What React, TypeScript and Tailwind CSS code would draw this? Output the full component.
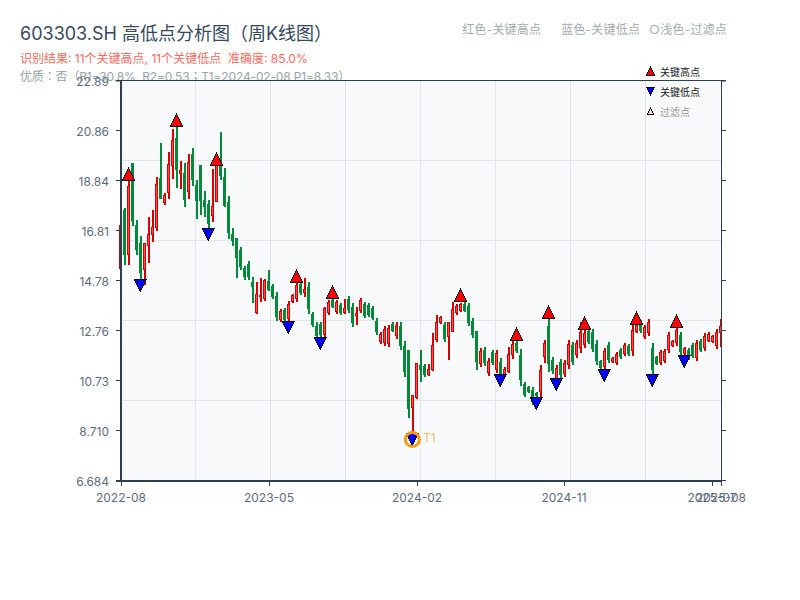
type Candle = [string, number, number, number?, number?];

// one row per week: colour, high y, low y, body top y, body bottom y (in page pixels)
const candles: Candle[] = [
  ['r', 216, 278], ['g', 208, 265, 210, 255], ['r', 180, 265, 186, 255], ['g', 163, 226, 163, 221],
  ['g', 220, 255], ['g', 236, 280], ['r', 243, 285, 243, 270], ['r', 217, 263, 234, 246],
  ['r', 210, 242, 227, 235], ['r', 177, 231, 184, 228], ['g', 143, 199, 178, 199], ['r', 193, 205],
  ['r', 152, 199, 164, 193], ['r', 129, 179, 140, 166], ['g', 127, 188, 138, 170], ['r', 161, 189, 170, 174],
  ['g', 163, 207, 173, 200], ['r', 154, 199, 162, 192], ['g', 148, 186], ['g', 180, 219, 185, 201],
  ['g', 165, 215, 165, 201], ['g', 191, 217, 200, 207], ['g', 200, 228], ['r', 169, 222, 206, 216],
  ['r', 163, 202, 163, 202], ['g', 132, 180, 166, 176], ['g', 168, 207, 177, 206], ['g', 196, 239, 202, 233],
  ['g', 228, 246, 234, 241], ['g', 238, 278, 238, 258], ['g', 247, 270], ['g', 266, 280, 268, 277],
  ['g', 261, 280], ['g', 277, 303, 282, 287], ['r', 282, 314, 294, 313], ['r', 278, 302, 295, 297],
  ['r', 279, 301, 280, 299], ['g', 270, 291, 281, 290], ['g', 284, 299], ['g', 292, 321],
  ['r', 309, 322], ['g', 308, 322], ['r', 301, 322], ['r', 294, 303],
  ['r', 282, 302], ['g', 282, 295], ['r', 278, 297, 289, 293], ['g', 282, 314],
  ['g', 312, 327], ['g', 322, 337, 326, 336], ['g', 322, 337], ['r', 307, 337, 308, 335],
  ['r', 300, 315], ['g', 299, 308], ['r', 300, 314], ['g', 303, 315],
  ['r', 299, 314, 308, 313], ['g', 296, 313], ['g', 303, 327], ['r', 307, 325, 313, 316],
  ['r', 298, 313], ['g', 302, 318], ['g', 303, 317], ['g', 306, 320],
  ['g', 318, 335], ['r', 332, 344], ['r', 326, 346], ['r', 325, 347],
  ['g', 322, 332], ['r', 322, 339], ['g', 322, 350], ['g', 341, 377],
  ['g', 350, 418, 350, 409], ['r', 395, 433, 395, 408], ['r', 363, 399, 363, 398], ['g', 350, 382, 365, 370],
  ['g', 364, 377], ['r', 364, 376, 369, 375], ['r', 333, 371, 345, 370], ['r', 315, 342, 322, 340],
  ['r', 316, 324], ['g', 322, 342], ['r', 322, 360, 322, 337], ['r', 302, 332, 309, 332],
  ['r', 304, 315], ['r', 303, 312], ['g', 302, 312], ['g', 303, 326],
  ['g', 318, 338], ['g', 331, 370, 331, 362], ['r', 348, 367], ['g', 347, 366],
  ['r', 358, 376], ['g', 350, 365], ['r', 350, 373], ['g', 358, 383],
  ['r', 367, 377], ['r', 347, 373, 354, 372], ['r', 340, 359, 344, 355], ['g', 341, 353],
  ['g', 349, 386], ['g', 382, 397], ['g', 386, 393], ['g', 387, 405],
  ['g', 392, 397], ['r', 365, 397], ['r', 340, 363, 343, 357], ['g', 318, 372],
  ['g', 357, 374], ['r', 365, 387], ['g', 359, 378], ['r', 360, 377],
  ['r', 340, 369], ['g', 342, 365], ['r', 340, 358], ['r', 322, 353, 332, 348],
  ['r', 330, 348], ['g', 329, 344], ['g', 329, 352], ['g', 340, 365],
  ['g', 360, 369], ['r', 348, 370], ['g', 342, 363], ['r', 357, 363],
  ['r', 352, 365], ['g', 348, 359], ['r', 343, 356], ['g', 344, 356],
  ['r', 325, 356], ['r', 324, 333], ['g', 320, 333], ['r', 325, 339],
  ['r', 319, 336], ['g', 343, 375], ['g', 356, 365], ['r', 350, 365],
  ['r', 349, 363], ['r', 332, 353], ['r', 340, 347], ['r', 327, 346],
  ['g', 332, 355], ['r', 347, 355], ['g', 348, 360], ['g', 343, 358],
  ['r', 340, 361], ['g', 339, 352], ['r', 333, 351], ['r', 332, 342],
  ['r', 335, 343], ['r', 329, 349], ['r', 319, 347, 326, 333],
];

const highs = [[128, 168], [176, 114], [216, 153], [296, 270], [332, 286], [460, 289], [516, 328], [548, 306], [584, 317], [636, 312], [676, 315]];
const lows = [[140, 279], [208, 228], [288, 321], [320, 337], [412, 433], [500, 374], [536, 397], [556, 378], [604, 369], [652, 374], [684, 355]];

const yLabels = ['22.89', '20.86', '18.84', '16.81', '14.78', '12.76', '10.73', '8.710', '6.684'];
const xLabels: [number, string][] = [[121, '2022-08'], [269, '2023-05'], [417, '2024-02'], [564, '2024-11'], [712, '2025-07'], [721, '2025-08']];

function Up({ x, y, s = 12, fill = '#ff0000' }: { x: number; y: number; s?: number; fill?: string }) {
  return <polygon points={`${x},${y} ${x - s / 2},${y + s} ${x + s / 2},${y + s}`} fill={fill} stroke="#000" strokeWidth={1} shapeRendering="crispEdges" />;
}

function Down({ x, y, s = 12, fill = '#0000ff' }: { x: number; y: number; s?: number; fill?: string }) {
  return <polygon points={`${x - s / 2},${y} ${x + s / 2},${y} ${x},${y + s}`} fill={fill} stroke="#000" strokeWidth={1} shapeRendering="crispEdges" />;
}

function Chart() {
  return (
    <svg width={800} height={540} viewBox="0 60 800 540" className="relative block">
      <rect x={121} y={81} width={600} height={400} fill="#f8f9fb" />
      {[161, 241, 321, 401].map((y) => (
        <line key={y} x1={121} x2={721} y1={y - 0.5} y2={y - 0.5} stroke="#e2e6ec" />
      ))}
      {[195, 270, 345, 420, 495, 570, 645].map((x) => (
        <line key={x} x1={x + 0.5} x2={x + 0.5} y1={81} y2={481} stroke="#e2e6ec" />
      ))}

      <g shapeRendering="crispEdges">
        {candles.map(([c, hi, lo, bt, bb], i) => {
          const top = bt ?? Math.round(hi + (lo - hi) * 0.15);
          const bottom = bb ?? Math.round(lo - (lo - hi) * 0.15);
          const x = 119 + 4 * i;
          return c === 'r' ? (
            <g key={i}>
              <rect x={x + 1} y={hi} width={2} height={lo - hi} fill="#d40000" />
              <rect x={x} y={top} width={3} height={bottom - top} fill="#d40000" />
              <rect x={x + 1} y={top + 1} width={1} height={Math.max(bottom - top - 2, 0)} fill="#fb4a4a" />
            </g>
          ) : (
            <g key={i}>
              <rect x={x + 1} y={hi} width={2} height={lo - hi} fill="#008a3a" />
              <rect x={x} y={top} width={3} height={bottom - top} fill="#008a3a" />
            </g>
          );
        })}
      </g>

      {highs.map(([x, y]) => <Up key={x} x={x + 0.4} y={y} s={12.5} />)}
      {lows.map(([x, y]) => <Down key={x} x={x + 0.4} y={y} s={12.5} />)}

      <circle cx={412.3} cy={439.5} r={7} fill="none" stroke="#f39c12" strokeWidth={3} />
      <text x={423} y={442} className="text-xs fill-[#f6bd6e]">T1</text>

      <path d="M121 80.5H726M721.5 81V481M116 81H121M721 81H726" stroke="#2c3e50" fill="none" />
      {yLabels.map((t, i) => (
        <g key={t}>
          <line x1={116} x2={121} y1={80.5 + 50 * i} y2={80.5 + 50 * i} stroke="#2c3e50" />
          <line x1={721} x2={726} y1={80.5 + 50 * i} y2={80.5 + 50 * i} stroke="#2c3e50" />
          <text x={109} y={86 + 50 * i} textAnchor="end" className="text-xs fill-[#5d6b7e]">{t}</text>
        </g>
      ))}
      <line x1={121} x2={121} y1={80} y2={482} stroke="#2c3e50" strokeWidth={2} />
      <line x1={116} x2={721} y1={481} y2={481} stroke="#2c3e50" strokeWidth={2} />
      {xLabels.map(([x, t]) => (
        <g key={t}>
          <line x1={x + 0.5} x2={x + 0.5} y1={481} y2={486} stroke="#2c3e50" />
          <text x={x} y={502} textAnchor="middle" className="text-xs fill-[#5d6b7e]">{t}</text>
        </g>
      ))}

      <Up x={650.5} y={67} s={8} />
      <text x={660} y={76} className="text-[10px] fill-[#222222]">关键高点</text>
      <Down x={650.5} y={87} s={8} />
      <text x={660} y={96} className="text-[10px] fill-[#222222]">关键低点</text>
      <Up x={650.5} y={108} s={6} fill="#ffd5d5" />
      <text x={660} y={116} className="text-[10px] fill-[#999999]">过滤点</text>
    </svg>
  );
}

export default function App() {
  return (
    <div className="w-[800px] h-[600px] bg-white overflow-hidden font-['Inter','Noto_Sans_CJK_SC',sans-serif]">
      <div className="h-[60px] pt-[22px] pl-5">
        <div className="flex justify-between items-start pr-[73px]">
          <h1 className="text-lg leading-6 text-[#34495e]">603303.SH 高低点分析图（周K线图）</h1>
          <div className="flex text-xs leading-4 tracking-[0.2px] text-[#a3abac]">
            <span>红色-关键高点</span>
            <span className="ml-5">蓝色-关键低点</span>
            <span className="ml-[9px]">○浅色-过滤点</span>
          </div>
        </div>
        <p className="mt-[5px] text-xs leading-4 text-[#fb6a60] whitespace-pre">识别结果: 11个关键高点, 11个关键低点  准确度: 85.0%</p>
        <p className="mt-0.5 text-xs leading-4 tracking-[-0.15px] text-[#95a5a6] whitespace-pre font-['Inter','Noto_Sans_CJK_TC',sans-serif]">优质：否（R1=30.8%, R2=0.53；T1=2024-02-08 P1=8.33）</p>
      </div>
      <Chart />
    </div>
  );
}
